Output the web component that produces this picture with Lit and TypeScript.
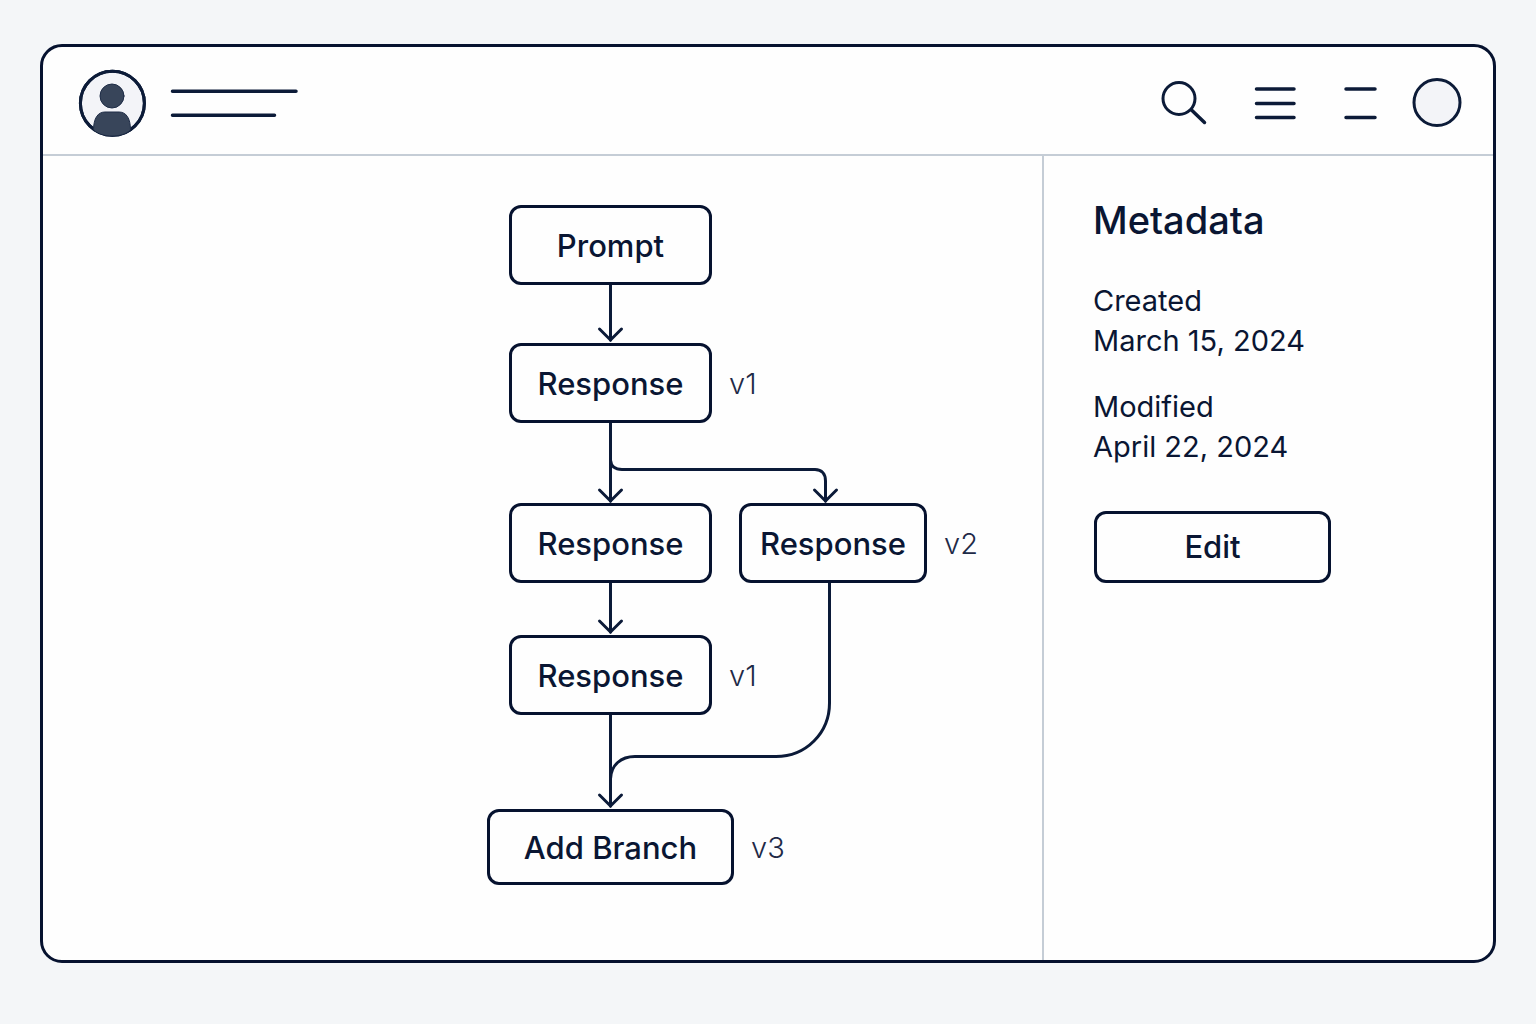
import { LitElement, html, svg, css } from "lit";
import { customElement, property } from "lit/decorators.js";
import { styleMap } from "lit/directives/style-map.js";

interface FlowNode {
  label: string;
  x: number;
  y: number;
  width: number;
  height: number;
  version?: string;
  action?: boolean;
}

const NODES: FlowNode[] = [
  { label: "Prompt", x: 29, y: 49, width: 203, height: 80 },
  { label: "Response", x: 29, y: 187, width: 203, height: 80, version: "v1" },
  { label: "Response", x: 29, y: 347, width: 203, height: 80 },
  { label: "Response", x: 259, y: 347, width: 188, height: 80, version: "v2" },
  { label: "Response", x: 29, y: 479, width: 203, height: 80, version: "v1" },
  { label: "Add Branch", x: 7, y: 653, width: 247, height: 76, version: "v3", action: true },
];

const EDGES = [
  "M130.5 129V184",
  "M130.5 267V345",
  "M130.5 304C131 310 135 313.5 142 313.5H335C342 313.5 345.5 318 345.5 325V345",
  "M130.5 427V476",
  "M130.5 559V650",
  "M349.5 427V547C349.5 577 326 600.5 296 600.5H155C141 600.5 131 609 130.5 623",
];

const ARROW_TIPS = [
  [130.5, 184],
  [130.5, 345],
  [345.5, 345],
  [130.5, 476],
  [130.5, 650],
];

@customElement("flow-diagram")
export class FlowDiagram extends LitElement {
  @property({ attribute: false }) nodes: FlowNode[] = NODES;

  static styles = css`
    :host {
      display: block;
      position: relative;
      width: 520px;
      height: 780px;
      flex: none;
    }
    .edges {
      position: absolute;
      inset: 0;
      width: 100%;
      height: 100%;
      fill: none;
      stroke: #0b1a38;
      stroke-width: 3;
      stroke-linecap: round;
      stroke-linejoin: miter;
    }
    .node {
      position: absolute;
      display: flex;
      align-items: center;
    }
    .box {
      box-sizing: border-box;
      width: 100%;
      height: 100%;
      flex: none;
      display: flex;
      align-items: center;
      justify-content: center;
      margin: 0;
      padding: 2px 0 0;
      border: 3px solid #06122f;
      border-radius: 12px;
      background: #fefefe;
      color: #0a1633;
      font: 500 31px/40px Inter, "Liberation Sans", sans-serif;
      white-space: nowrap;
    }
    button.box {
      cursor: pointer;
    }
    .version {
      margin-left: 17px;
      padding-top: 2px;
      color: #1e2a47;
      font-size: 29px;
      font-weight: 350;
      line-height: 40px;
    }
  `;

  render() {
    return html`
      <svg class="edges" viewBox="0 0 520 780" aria-hidden="true">
        ${EDGES.map((d) => svg`<path d=${d} />`)}
        ${ARROW_TIPS.map(([x, y]) => svg`<path d=${`M${x - 11} ${y - 11}L${x} ${y}L${x + 11} ${y - 11}`} />`)}
      </svg>
      ${this.nodes.map(
        (n) => html`
          <div
            class="node"
            style=${styleMap({
              left: `${n.x}px`,
              top: `${n.y}px`,
              width: `${n.width}px`,
              height: `${n.height}px`,
            })}
          >
            ${n.action
              ? html`<button class="box" type="button">${n.label}</button>`
              : html`<div class="box">${n.label}</div>`}
            ${n.version ? html`<span class="version">${n.version}</span>` : null}
          </div>
        `,
      )}
    `;
  }
}

@customElement("app-header")
export class AppHeader extends LitElement {
  static styles = css`
    :host {
      display: flex;
      align-items: center;
      justify-content: space-between;
      box-sizing: border-box;
      height: 109px;
      padding: 4px 31px 0 35px;
      border-bottom: 2px solid #c5cdd6;
    }
    .brand,
    .tools {
      display: flex;
      align-items: center;
    }
    .brand {
      gap: 24px;
    }
    .tools {
      gap: 32px;
    }
    button {
      display: block;
      margin: 0;
      padding: 0;
      border: 0;
      background: none;
      cursor: pointer;
    }
    svg {
      display: block;
      fill: none;
      stroke: #0c1b38;
      stroke-width: 3;
      stroke-linecap: round;
    }
    .disc {
      fill: #f3f4f8;
    }
    .person {
      fill: #38455a;
      stroke: #1f2d47;
      stroke-width: 1;
    }
    .bars {
      stroke-width: 3.5;
    }
  `;

  render() {
    return html`
      <div class="brand">
        <button type="button" aria-label="Profile">
          <svg width="68" height="68" viewBox="0 0 68 68">
            <defs>
              <clipPath id="ring"><circle cx="34.4" cy="34.3" r="33" /></clipPath>
            </defs>
            <circle class="disc" cx="34.4" cy="34.3" r="32" />
            <circle cx="34.4" cy="34.3" r="32" />
            <g clip-path="url(#ring)">
              <circle class="person" cx="34" cy="27" r="12" />
              <path class="person" d="M15.500 61C15.500 49 20 43 27 43H41C48 43 52.500 49 52.500 61C48 65.500 41 67 34 67S20 65.500 15.500 61Z" />
            </g>
          </svg>
        </button>
        <svg class="bars" width="130" height="32" viewBox="0 0 130 32" aria-hidden="true">
          <path d="M2.500 4.300H126M2.500 28.300H104.500" />
        </svg>
      </div>
      <div class="tools">
        <button type="button" aria-label="Search">
          <svg width="56" height="50" viewBox="0 0 56 50">
            <circle cx="23" cy="20.500" r="16" />
            <path d="M35.500 32L48.500 44.500" stroke-width="3.500" />
          </svg>
        </button>
        <button type="button" aria-label="Menu">
          <svg class="bars" width="64" height="50" viewBox="0 0 64 50">
            <path d="M12.500 11H50M12.500 25.500H50M12.500 39.500H50" />
          </svg>
        </button>
        <button type="button" aria-label="View">
          <svg class="bars" width="40" height="50" viewBox="0 0 40 50">
            <path d="M6 11H35M6 39.500H35" />
          </svg>
        </button>
        <button type="button" aria-label="Account">
          <svg width="50" height="50" viewBox="0 0 50 50">
            <circle class="disc" cx="25" cy="24.500" r="23" />
          </svg>
        </button>
      </div>
    `;
  }
}

@customElement("metadata-panel")
export class MetadataPanel extends LitElement {
  static styles = css`
    :host {
      display: block;
      box-sizing: border-box;
      padding: 40px 49px;
      border-left: 2px solid #c5cdd6;
      color: #0a1633;
    }
    h2 {
      margin: 0 0 37px;
      font-size: 38px;
      font-weight: 500;
      line-height: 48px;
    }
    dl {
      display: grid;
      gap: 26px;
      margin: 0 0 44px;
      font-size: 29px;
      line-height: 40px;
    }
    dt,
    dd {
      margin: 0;
    }
    button {
      box-sizing: border-box;
      width: 237px;
      height: 72px;
      margin: 0 1px;
      padding: 0;
      border: 3px solid #06122f;
      border-radius: 12px;
      background: #fefefe;
      color: inherit;
      font: 500 31px/40px Inter, "Liberation Sans", sans-serif;
      cursor: pointer;
    }
  `;

  render() {
    return html`
      <h2>Metadata</h2>
      <dl>
        <div>
          <dt>Created</dt>
          <dd>March 15, 2024</dd>
        </div>
        <div>
          <dt>Modified</dt>
          <dd>April 22, 2024</dd>
        </div>
      </dl>
      <button type="button">Edit</button>
    `;
  }
}

@customElement("app-root")
export class AppRoot extends LitElement {
  static styles = css`
    :host {
      display: flex;
      box-sizing: border-box;
      min-height: 100vh;
      padding: 44px 40px 61px;
      background: #f4f6f8;
      font-family: Inter, "Liberation Sans", sans-serif;
    }
    .window {
      flex: 1;
      min-width: 0;
      display: flex;
      flex-direction: column;
      border: 3px solid #06122f;
      border-radius: 22px;
      background: #fefefe;
      overflow: hidden;
    }
    .body {
      flex: 1;
      display: grid;
      grid-template-columns: minmax(0, 1fr) 451px;
    }
    .canvas {
      display: flex;
      justify-content: flex-end;
      padding-right: 42px;
    }
  `;

  render() {
    return html`
      <div class="window">
        <app-header></app-header>
        <div class="body">
          <main class="canvas"><flow-diagram></flow-diagram></main>
          <metadata-panel></metadata-panel>
        </div>
      </div>
    `;
  }
}
